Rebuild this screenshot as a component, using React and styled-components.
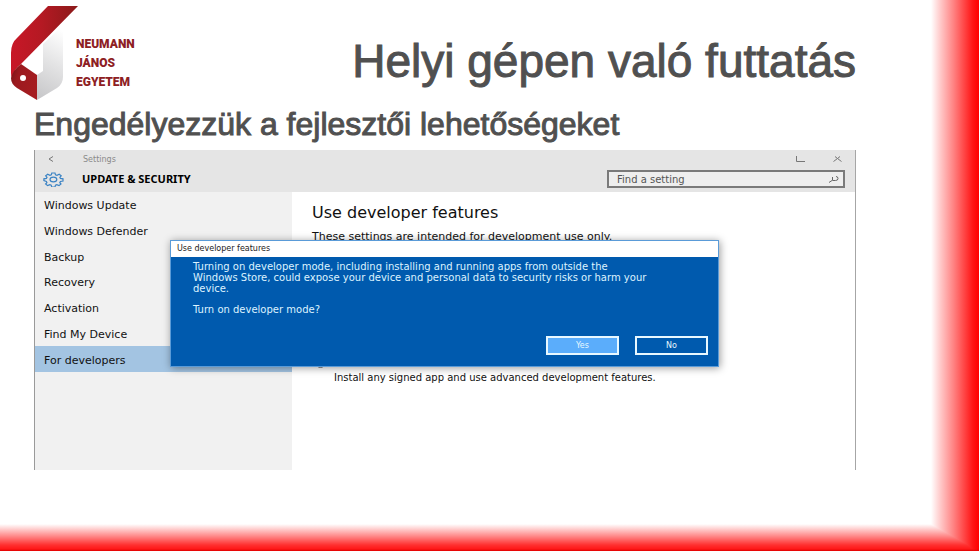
import React from "react";
import styled, { createGlobalStyle, css } from "styled-components";

const GlobalStyle = createGlobalStyle`
  *, *::before, *::after { box-sizing: border-box; }
  body { margin: 0; font-family: "Liberation Sans", Arial, sans-serif; }
  h1, h2, h3, p, ul { margin: 0; padding: 0; }
`;

const uiFont = css`
  font-family: "DejaVu Sans", Verdana, sans-serif;
`;

const Slide = styled.main`
  min-height: 100vh;
  padding: 4px 123px 40px 34px;
  background:
    linear-gradient(to left, #ff0000 0, #ff1414 6px, #ff8080 25px, #ffdcdc 42px, #ffffff 48px),
    linear-gradient(to top, #e00000 0, #ff1818 2px, #ff3030 6px, #ff8a8a 15px, #ffffff 27px);
  background-blend-mode: darken;
`;

const SlideHeader = styled.header`
  display: flex;
  justify-content: space-between;
  align-items: center;
  height: 98px;
  margin-left: -24px;
`;

const Brand = styled.div`
  display: flex;
  align-items: center;
  svg { display: block; overflow: visible; }
`;

const BrandName = styled.p`
  padding-top: 21px;
  font-family: Roboto, "Liberation Sans", sans-serif;
  font-size: 12px;
  line-height: 19px;
  font-weight: 900;
  color: #8d2023;
`;

const Title = styled.h1`
  font-size: 46px;
  line-height: 56px;
  font-weight: 400;
  color: #505050;
  white-space: nowrap;
  padding-top: 16px;
  -webkit-text-stroke: 1px #505050;
`;

const Subtitle = styled.h2`
  font-size: 32px;
  line-height: 44px;
  font-weight: 400;
  color: #505050;
  margin-bottom: 4px;
  white-space: nowrap;
  -webkit-text-stroke: 1px #505050;
`;

const SettingsWindow = styled.section`
  ${uiFont}
  position: relative;
  border-left: 1px solid #9a9a9a;
  border-right: 1px solid #a6a6a6;
  color: #111111;
`;

const WindowHeader = styled.div`
  background: #e5e5e5;
  padding: 0 10px 3px 8px;
`;

const TitleBar = styled.div`
  display: flex;
  align-items: center;
  height: 18px;
  font-size: 8px;
  color: #8a8a8a;
`;

const IconButton = styled.button`
  display: grid;
  place-items: center;
  padding: 0;
  border: 0;
  background: none;
  color: #777777;
  width: 16px;
  height: 16px;
`;

const WindowName = styled.span`
  flex: 1;
  margin-left: 24px;
`;

const WindowControls = styled.div`
  display: flex;
  gap: 21px;
`;

const Toolbar = styled.div`
  display: flex;
  align-items: center;
  height: 21px;
  padding-top: 1px;
`;

const Category = styled.h3`
  font-family: "Noto Sans", "Open Sans", sans-serif;
  flex: 1;
  margin-left: 18px;
  font-size: 11px;
  line-height: 16px;
  font-weight: 700;
  color: #000000;
`;

const SearchBox = styled.label`
  display: flex;
  align-items: center;
  width: 238px;
  height: 18px;
  padding: 0 4px 0 8px;
  border: 2px solid #7a7a7a;
  background: #eeeeee;
  color: #666666;
`;

const SearchInput = styled.input`
  ${uiFont}
  flex: 1;
  min-width: 0;
  padding: 0;
  border: 0;
  outline: 0;
  background: transparent;
  font-size: 10px;
  color: #555555;
  &::placeholder { color: #555555; opacity: 1; }
`;

const WindowBody = styled.div`
  display: flex;
  min-height: 278px;
`;

const Sidebar = styled.nav`
  width: 257px;
  flex: none;
  background: #f1f1f1;
`;

const NavList = styled.ul`
  display: grid;
  grid-auto-rows: 1fr;
  height: 180px;
  list-style: none;
`;

const NavLink = styled.a`
  display: flex;
  align-items: center;
  height: 100%;
  padding: 2px 9px 0;
  font-size: 11px;
  text-decoration: none;
  color: #111111;
  background: ${(p) => (p.$active ? "#a3c4e2" : "transparent")};
`;

const Content = styled.div`
  flex: 1;
  padding: 11px 0 0 20px;
  background: #ffffff;
`;

const ContentTitle = styled.h3`
  font-size: 16px;
  line-height: 20px;
  font-weight: 400;
`;

const Lead = styled.p`
  margin-top: 6px;
  font-size: 11px;
  line-height: 16px;
`;

const Option = styled.div`
  margin-top: 113px;
`;

const OptionRow = styled.label`
  display: flex;
  align-items: center;
  height: 12px;
  input { width: 13px; height: 10px; margin: 0 0 2px 2px; }
`;

const OptionNote = styled.p`
  margin-left: 22px;
  font-size: 10px;
  line-height: 16px;
`;

const Dialog = styled.div`
  position: absolute;
  top: 90px;
  left: 135px;
  right: 136px;
  border: 1px solid #5a9bd8;
  background: #005aae;
  color: #ddf3ff;
  box-shadow: 1px 1px 8px rgba(0, 0, 0, 0.4);
`;

const DialogTitle = styled.h3`
  padding-left: 6px;
  background: #ffffff;
  color: #222222;
  font-size: 8px;
  line-height: 16px;
  font-weight: 400;
`;

const DialogBody = styled.div`
  padding: 4px 20px 0 22px;
  font-size: 10px;
  line-height: 11px;
  p + p { margin-top: 10px; }
`;

const DialogActions = styled.div`
  display: flex;
  justify-content: flex-end;
  gap: 16px;
  padding: 21px 10px 11px;
`;

const DialogButton = styled.button`
  ${uiFont}
  width: 73px;
  height: 19px;
  padding: 0;
  border: 2px solid #e8f8ff;
  font-size: 8px;
  line-height: 12px;
  color: #e8f8ff;
  background: ${(p) => (p.$primary ? "#5badfb" : "#005aae")};
`;

function Logo() {
  return (
    <svg width="66" height="96" viewBox="10 4 66 96" aria-hidden="true">
      <defs>
        <linearGradient id="band" x1="0" y1="0" x2="1" y2="0">
          <stop offset="0" stopColor="#c81727" />
          <stop offset="0.45" stopColor="#b51923" />
          <stop offset="1" stopColor="#8b1a1a" />
        </linearGradient>
        <linearGradient id="page" x1="0.6" y1="0" x2="0.4" y2="1">
          <stop offset="0" stopColor="#ffffff" />
          <stop offset="0.5" stopColor="#e3e3e4" />
          <stop offset="1" stopColor="#c9c9cb" />
        </linearGradient>
        <linearGradient id="fold" x1="0" y1="0" x2="1" y2="0.5">
          <stop offset="0" stopColor="#701414" />
          <stop offset="0.35" stopColor="#9c1a1f" />
          <stop offset="1" stopColor="#a51c20" />
        </linearGradient>
      </defs>
      <path d="M63 24V76Q63 83 57 87L37 99V74L43 70V43Z" fill="url(#page)" />
      <path d="M48 5H78L21 63Q14 68 12 77Q11 76 11 72V52Q11 42 17 37Z" fill="url(#band)" />
      <path d="M21 63L37 74V99L17 87Q11 83 11 77Q13 69 21 63Z" fill="url(#fold)" />
      <circle cx="23" cy="77" r="3" fill="#ffffff" />
    </svg>
  );
}

function GearIcon() {
  return (
    <svg width="21" height="15" viewBox="0 0 21 15" fill="none" stroke="#3b83c4" strokeWidth="1.2" aria-hidden="true">
      <path d="M8.8 1h3.2l.5 1.8 1.5.5 2.2-1 2 1.6-1.3 1.5.5 1 2.6.4v2.2l-2.6.5-.6 1.1 1.2 1.4-2 1.6-2.2-.9-1.3.5-.5 1.8H8.7l-.5-1.8-1.4-.5-2.2.9-2-1.6 1.3-1.4-.5-1.1L.9 8.600V6.800l2.500-.4.6-1-1.300-1.500 2-1.600 2.200 1 1.400-.5Z" />
      <ellipse cx="10.400" cy="7.500" rx="3.400" ry="2.400" />
    </svg>
  );
}

const navItems = [
  "Windows Update",
  "Windows Defender",
  "Backup",
  "Recovery",
  "Activation",
  "Find My Device",
  "For developers",
];

export default function App() {
  return (
    <>
      <GlobalStyle />
      <Slide>
        <SlideHeader>
          <Brand>
            <Logo />
            <BrandName>NEUMANN<br />JÁNOS<br />EGYETEM</BrandName>
          </Brand>
          <Title>Helyi gépen való futtatás</Title>
        </SlideHeader>
        <Subtitle>Engedélyezzük a fejlesztői lehetőségeket</Subtitle>
        <SettingsWindow>
          <WindowHeader>
            <TitleBar>
              <IconButton aria-label="Back">
                <svg width="6" height="6" viewBox="0 0 6 6" fill="none" stroke="currentColor"><path d="M5 .5 1 3l4 2.500" /></svg>
              </IconButton>
              <WindowName>Settings</WindowName>
              <WindowControls>
                <IconButton aria-label="Maximize">
                  <svg width="9" height="6" viewBox="0 0 9 6" fill="none" stroke="currentColor"><path d="M.5 0v5.500H9" /></svg>
                </IconButton>
                <IconButton aria-label="Close">
                  <svg width="9" height="6" viewBox="0 0 9 6" fill="none" stroke="currentColor"><path d="M.5 5.500 4.500 2.500l4 3M2 .5l2.500 2L7 .5" /></svg>
                </IconButton>
              </WindowControls>
            </TitleBar>
            <Toolbar>
              <GearIcon />
              <Category>UPDATE &amp; SECURITY</Category>
              <SearchBox>
                <SearchInput type="text" placeholder="Find a setting" aria-label="Find a setting" />
                <svg width="10" height="7" viewBox="0 0 10 7" fill="none" stroke="currentColor" aria-hidden="true">
                  <path d="M0 6.500 3 4.500M3.500 1v3.500h3Q9 4.500 9 2.500T7 .5" />
                </svg>
              </SearchBox>
            </Toolbar>
          </WindowHeader>
          <WindowBody>
            <Sidebar aria-label="Update and security">
              <NavList>
                {navItems.map((item) => (
                  <li key={item}>
                    <NavLink href="#" $active={item === "For developers"}>{item}</NavLink>
                  </li>
                ))}
              </NavList>
            </Sidebar>
            <Content>
              <ContentTitle>Use developer features</ContentTitle>
              <Lead>These settings are intended for development use only.</Lead>
              <Option>
                <OptionRow>
                  <input type="radio" name="mode" aria-labelledby="option-note" />
                </OptionRow>
                <OptionNote id="option-note">Install any signed app and use advanced development features.</OptionNote>
              </Option>
            </Content>
          </WindowBody>
          <Dialog role="dialog" aria-labelledby="dialog-title">
            <DialogTitle id="dialog-title">Use developer features</DialogTitle>
            <DialogBody>
              <p>
                Turning on developer mode, including installing and running apps from outside the
                <br />
                Windows Store, could expose your device and personal data to security risks or harm your
                <br />
                device.
              </p>
              <p>Turn on developer mode?</p>
            </DialogBody>
            <DialogActions>
              <DialogButton $primary>Yes</DialogButton>
              <DialogButton>No</DialogButton>
            </DialogActions>
          </Dialog>
        </SettingsWindow>
      </Slide>
    </>
  );
}
